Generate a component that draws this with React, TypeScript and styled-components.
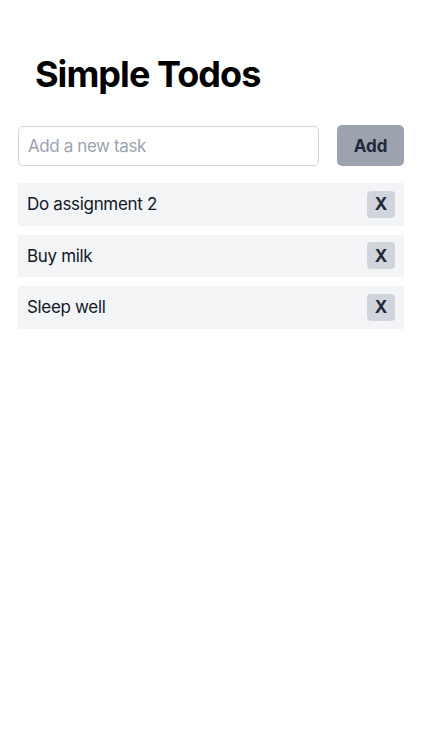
import React, { useState } from "react";
import styled, { createGlobalStyle } from "styled-components";

const Global = createGlobalStyle`
  html, body { margin: 0; padding: 0; background: #ffffff; }
  body { font-family: Inter, "Noto Sans", sans-serif; color: #111827; }
  * { box-sizing: border-box; }
`;

const Page = styled.div`
  padding: 52px 18px 0 18px;
  display: flex;
  flex-direction: column;
`;

const Title = styled.h1`
  margin: 0 0 0 17px;
  font-size: 36px;
  line-height: 44px;
  font-weight: 700;
  color: #000000;
  letter-spacing: -0.95px;
`;

const Form = styled.div`
  display: flex;
  align-items: center;
  gap: 18px;
  margin-top: 29px;
`;

const Input = styled.input`
  flex: 1;
  min-width: 0;
  height: 40px;
  border: 1px solid #d1d5db;
  border-radius: 5px;
  padding: 0 9px;
  font-family: Inter, "Noto Sans", sans-serif;
  font-size: 17px;
  letter-spacing: -0.4px;
  color: #111827;
  outline: none;
  &::placeholder { color: #9ca3af; }
`;

const AddButton = styled.button`
  width: 67px;
  height: 41px;
  border: none;
  border-radius: 5px;
  background: #9ca3af;
  color: #1f2937;
  font-family: Inter, "Noto Sans", sans-serif;
  font-size: 17px;
  font-weight: 700;
`;

const List = styled.ul`
  list-style: none;
  margin: 17px 0 0 0;
  padding: 0;
  display: flex;
  flex-direction: column;
  gap: 9px;
`;

const Row = styled.li`
  height: 42.5px;
  background: #f3f4f6;
  display: flex;
  align-items: center;
  justify-content: space-between;
  padding: 0 9px 0 9px;
  font-size: 17px;
  letter-spacing: -0.33px;
  color: #111827;
`;

const RemoveButton = styled.button`
  width: 28px;
  height: 27px;
  border: none;
  border-radius: 4px;
  background: #d1d5db;
  color: #1f2937;
  font-family: Inter, "Noto Sans", sans-serif;
  font-size: 17px;
  font-weight: 700;
  padding: 0;
`;

export default function App() {
  const [items] = useState(["Do assignment 2", "Buy milk", "Sleep well"]);
  return (
    <>
      <Global />
      <Page>
        <Title>Simple Todos</Title>
        <Form>
          <Input placeholder="Add a new task" />
          <AddButton>Add</AddButton>
        </Form>
        <List>
          {items.map((t) => (
            <Row key={t}>
              <span>{t}</span>
              <RemoveButton>X</RemoveButton>
            </Row>
          ))}
        </List>
      </Page>
    </>
  );
}
